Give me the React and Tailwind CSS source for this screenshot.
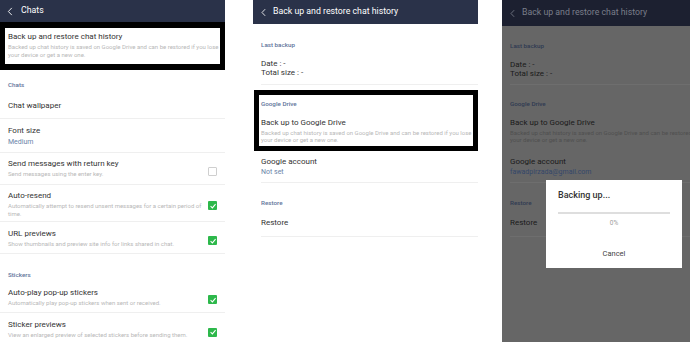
import React from 'react';

const font = { fontFamily: 'Roboto, "Noto Sans", sans-serif' };

const Chevron = ({ className }) => (
  <svg viewBox="0 0 6 10" className={className} fill="none">
    <path d="M5 1 L1.2 5 L5 9" stroke="currentColor" strokeWidth="1" />
  </svg>
);

const Box = ({ on }) =>
  on ? (
    <div className="w-[9px] h-[9px] bg-[#2db84b] rounded-[1px] flex items-center justify-center shrink-0">
      <svg viewBox="0 0 10 10" className="w-[8px] h-[8px]">
        <path d="M2 5.3 L4.2 7.4 L8.2 2.6" stroke="white" strokeWidth="1.3" fill="none" />
      </svg>
    </div>
  ) : (
    <div className="w-[9px] h-[9px] border border-[#cfcfcf] rounded-[1px] shrink-0" />
  );

// one settings row with title, optional sub text and checkbox
const Row = ({ title, sub, checked, className }) => (
  <div className={`flex items-center pl-[8px] pr-[8px] border-b border-[#efefef] ${className}`}>
    <div className="self-start flex-1 min-w-0 pr-[4px]">
      <div className="text-[8px] leading-[12px] text-[#333]">{title}</div>
      {sub}
    </div>
    {checked !== undefined && <Box on={checked} />}
  </div>
);

const Desc = ({ children }) => (
  <div className="text-[6px] leading-[8px] text-[#b8b8b8]">{children}</div>
);

const ChatsScreen = () => (
  <div className="w-[225px] shrink-0 bg-white">
    <div className="h-[22px] bg-[#2a3249] flex items-center text-white">
      <Chevron className="w-[6px] h-[9px] ml-[7px]" />
      <span className="ml-[8px] text-[8.75px]">Chats</span>
    </div>
    <div className="h-[48px] border-x-[5px] border-y-[6px] border-black pl-[3px] pt-[3px]">
      <div className="text-[8px] leading-[12px] text-[#333]">Back up and restore chat history</div>
      <div className="text-[6px] leading-[8px] text-[#b8b8b8]">
        Backed up chat history is saved on Google Drive and can be restored if you lose your device or get a new one.
      </div>
    </div>
    <div className="h-[26px] pt-[11px] pl-[8px] text-[6.25px] leading-[8px] font-medium text-[#60739a]">Chats</div>
    <Row title="Chat wallpaper" className="h-[23px] pt-[4px]" />
    <Row
      title="Font size"
      className="h-[34px] pt-[6px]"
      sub={<div className="text-[7px] leading-[10px] text-[#6b84a8]">Medium</div>}
    />
    <Row title="Send messages with return key" checked={false} className="h-[32px] pt-[5px]" sub={<Desc>Send messages using the enter key.</Desc>} />
    <Row
      title="Auto-resend"
      checked={true}
      className="h-[37px] pt-[5px]"
      sub={<Desc>Automatically attempt to resend unsent messages for a certain period of time.</Desc>}
    />
    <Row title="URL previews" checked={true} className="h-[32px] pt-[6px]" sub={<Desc>Show thumbnails and preview site info for links shared in chat.</Desc>} />
    <div className="h-[28px] pt-[17px] pl-[8px] text-[6.25px] leading-[8px] font-medium text-[#60739a]">Stickers</div>
    <Row
      title="Auto-play pop-up stickers"
      checked={true}
      className="h-[31px] pt-[5px]"
      sub={<Desc>Automatically play pop-up stickers when sent or received.</Desc>}
    />
    <Row
      title="Sticker previews"
      checked={true}
      className="h-[32px] pt-[6px] border-b-0"
      sub={<Desc>View an enlarged preview of selected stickers before sending them.</Desc>}
    />
  </div>
);

const BackupScreen = ({ dim }) => {
  const title = dim ? 'text-[#1a1a1a]' : 'text-[#333]';
  const label = dim ? 'text-[#2f3a52]' : 'text-[#60739a]';
  const desc = dim ? 'text-[#4f4f4f]' : 'text-[#b8b8b8]';
  const line = dim ? 'border-[#6e6e6e]' : 'border-[#efefef]';
  return (
    <div className={`w-[225px] shrink-0 h-full ${dim ? 'bg-[#666666]' : 'bg-white'}`}>
      <div className={`flex items-center ${dim ? 'h-[26px] bg-[#1c2030] text-[#7a7e8a]' : 'h-[24px] bg-[#2a3249] text-white'}`}>
        <Chevron className="w-[5px] h-[9px] ml-[8px]" />
        <span className="ml-[7px] text-[8.75px]">Back up and restore chat history</span>
      </div>
      <div className={`ml-[8px] border-b ${line} ${dim ? 'pt-[16px] h-[59px]' : 'pt-[17px] h-[61px]'}`}>
        <div className={`text-[6.25px] leading-[8px] font-medium ${label}`}>Last backup</div>
        <div className={`mt-[9.5px] text-[8px] leading-[9px] ${title}`}>Date : -</div>
        <div className={`text-[8px] leading-[9px] ${title}`}>Total size : -</div>
      </div>
      <div className={`mt-[5px] ml-[1px] h-[61px] border-[5px] pl-[2px] pt-[5px] ${dim ? 'border-transparent' : 'border-black'}`}>
        <div className={`text-[6.25px] leading-[8px] font-medium ${label}`}>Google Drive</div>
        <div className={`mt-[9px] text-[8px] leading-[12px] ${title}`}>Back up to Google Drive</div>
        <div className={`text-[6px] leading-[7px] whitespace-nowrap ${desc}`}>
          Backed up chat history is saved on Google Drive and can be restored if you lose
        </div>
        <div className={`text-[6px] leading-[7px] ${desc}`}>your device or get a new one.</div>
      </div>
      <div className={`ml-[8px] pt-[5px] h-[32px] border-b ${line}`}>
        <div className={`text-[8px] leading-[12px] ${title}`}>Google account</div>
        <div className={`text-[7px] leading-[8px] ${dim ? 'text-[#34466a]' : 'text-[#6b84a8]'}`}>
          {dim ? 'fawadpirzada@gmail.com' : 'Not set'}
        </div>
      </div>
      <div className={`ml-[8px] pt-[16px] h-[54px] border-b ${line}`}>
        <div className={`text-[6.25px] leading-[8px] font-medium ${label}`}>Restore</div>
        <div className={`mt-[10px] text-[8px] leading-[12px] ${title}`}>Restore</div>
      </div>
    </div>
  );
};

export default function App() {
  return (
    <div className="w-[690px] h-[342px] flex bg-white overflow-hidden" style={font}>
      <ChatsScreen />
      <div className="w-[28px] shrink-0" />
      <BackupScreen />
      <div className="w-[24px] shrink-0" />
      <div className="relative w-[188px] shrink-0 h-full overflow-hidden bg-[#666666]">
        <BackupScreen dim />
        <div className="absolute left-[44px] top-[180px] w-[136px] h-[88px] bg-white flex flex-col px-[12px]">
          <div className="mt-[9px] text-[9px] leading-[12px] font-medium text-[#333]">Backing up...</div>
          <div className="mt-[11px] h-[2px] bg-[#dedede]" />
          <div className="mt-[5px] text-center text-[6.5px] leading-[8px] text-[#a0a0a0]">0%</div>
          <div className="mt-[22px] text-center text-[7.5px] leading-[10px] text-[#444]">Cancel</div>
        </div>
      </div>
    </div>
  );
}
